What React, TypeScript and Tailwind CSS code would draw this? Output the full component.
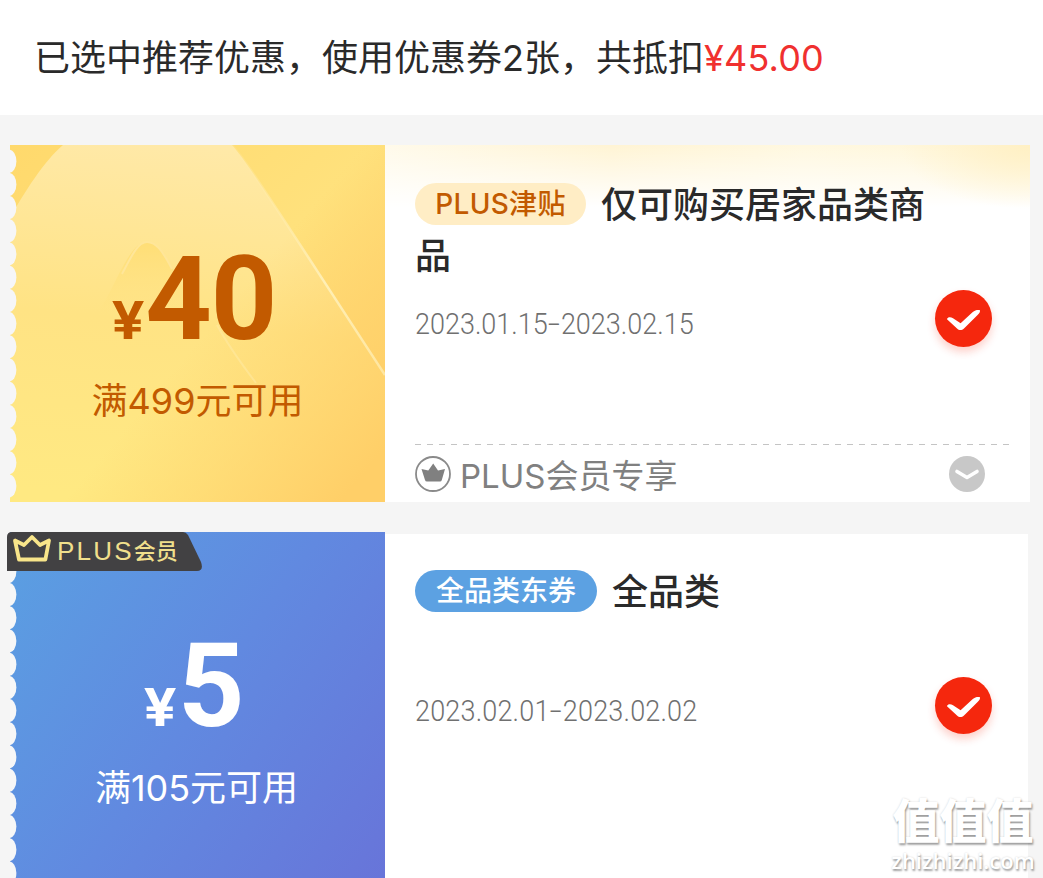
const Scallops = ({ fill }: { fill: string }) => (
    <svg className="absolute left-0 top-0 h-[357px] w-2" viewBox="0 0 8 357">
        {Array.from({ length: 15 }, (_, i) => (
            <ellipse key={i} cx="-1" cy={16.2 + i * 23.2} rx="7.4" ry="11.6" fill={fill} />
        ))}
    </svg>
)

const Checked = () => (
    <div className="flex size-[57px] items-center justify-center rounded-full bg-[#f5270d] shadow-[0_5px_8px_rgba(245,39,13,0.22)]">
        <svg className="size-[57px]" viewBox="0 0 57 57" fill="none">
            <path
                d="M12 29.2C12.500 27 15.500 26.600 18 28.200L25.600 33.200L37.500 22.200C40.300 19.800 43 19.800 45 20.200C45.200 22 44.400 23.300 42.600 25L29 38.400C26.600 40.600 24.200 40.600 22 38.400Z"
                fill="#fff"
            />
        </svg>
    </div>
)

const Price = ({ value }: { value: string }) => (
    <div className="flex h-[84px] items-baseline pr-[4px] font-bold leading-[84px]">
        <span className="mr-[1px] inline-block origin-right scale-x-[1.12] text-[52px]">¥</span>
        <span className="font-[Roboto] text-[116px] tracking-[-1px]">{value}</span>
    </div>
)

const Dates = ({ from, to }: { from: string; to: string }) => (
    <p className="h-[30px] w-[330px] origin-left scale-x-[0.9] font-[Roboto] text-[30px] font-light leading-[30px] text-[#707070]">
        {from}
        <span className="mx-[3px] inline-block scale-x-[1.6]">-</span>
        {to}
    </p>
)

const PlusTag = () => (
    <div className="absolute -left-[3px] top-0 h-[39px] w-[196px]">
        <svg className="absolute inset-0" width="196" height="39" viewBox="0 0 196 39" fill="none">
            <path d="M0 39V5Q0 0 5 0H176Q179 0 181 3L194 30Q197 39 190 39Z" fill="#424143" />
            <path
                d="M8 8.500L17 13L25 5L33 13L42 8.500L38.400 27.500H12Z"
                stroke="#f8e58a"
                strokeWidth="3.8"
                strokeLinejoin="round"
            />
        </svg>
        <p className="relative flex h-[38px] items-center pl-[50px] text-[#f0df8c]">
            <span className="font-['Liberation_Sans'] text-[26px] tracking-[2.2px]">PLUS</span>
            <span className="text-[22px] font-medium">会员</span>
        </p>
    </div>
)

const App = () => {
    return (
        <div className="relative h-[878px] w-[1043px] overflow-hidden bg-[#f5f5f5] font-[Inter,'Noto_Sans_CJK_SC',sans-serif] text-[#2a2a2a]">
            <header className="flex h-[115px] items-center bg-white pl-[34px] text-[36px] leading-[50px]">
                <p className="whitespace-nowrap">
                    已选中推荐优惠，使用优惠券2张，共抵扣
                    <span className="tracking-[0.2px] text-[#f0302f]">¥45.00</span>
                </p>
            </header>

            <main className="flex flex-col gap-[30px] pl-[10px] pt-[30px]">
                <section className="flex h-[357px] w-[1020px]">
                    <div className="relative w-[375px] bg-linear-[135deg,#ffd96c_0%,#ffe17c_50%,#ffcf68_100%]">
                        <svg className="absolute inset-0" width="375" height="357" viewBox="0 0 375 357" fill="none">
                            <defs>
                                <linearGradient id="hill" x1="0.5" y1="0" x2="0.4" y2="1">
                                    <stop offset="0" stopColor="#ffe9a8" />
                                    <stop offset="0.5" stopColor="#ffe384" />
                                    <stop offset="1" stopColor="#ffe982" />
                                </linearGradient>
                                <linearGradient id="shade" x1="0.25" y1="0.25" x2="1" y2="0.85">
                                    <stop offset="0.4" stopColor="#ffcf68" stopOpacity="0" />
                                    <stop offset="1" stopColor="#ffcf68" />
                                </linearGradient>
                                <linearGradient id="ridge" x1="0" y1="0" x2="1" y2="1">
                                    <stop offset="0" stopColor="#ffeaa6" stopOpacity="0.2" />
                                    <stop offset="0.6" stopColor="#ffefb5" />
                                    <stop offset="1" stopColor="#ffe6a0" />
                                </linearGradient>
                                <linearGradient id="inner" x1="0" y1="0" x2="0" y2="1">
                                    <stop offset="0" stopColor="#ffde76" />
                                    <stop offset="0.5" stopColor="#ffe17b" stopOpacity="0" />
                                </linearGradient>
                            </defs>
                            <path d="M0 73C14 48 34 16 53 0H222C238 18 262 57 375 230V357H0Z" fill="url(#hill)" />
                            <path d="M0 0H375V357H0Z" fill="url(#shade)" />
                            <path d="M222 0C238 18 262 57 375 230" stroke="url(#ridge)" strokeWidth="2.5" />
                            <path d="M90 165C108 135 120 97 137 97S163 130 180 153L245 240Z" fill="url(#inner)" />
                            <path d="M112 129C122 110 128 97 137 97S152 105 162 124" stroke="#ffe699" strokeWidth="2" />
                            <path d="M207 180C220 204 234 222 246 238" stroke="#ffeaa0" strokeOpacity="0.6" strokeWidth="2" />
                        </svg>
                        <Scallops fill="#f6f6f8" />
                        <div className="relative flex flex-col items-center pt-[112px] text-[#c25a00]">
                            <Price value="40" />
                            <p className="mt-[35px] text-[36px] leading-[50px]">满499元可用</p>
                        </div>
                    </div>

                    <div className="flex w-[645px] flex-col bg-white bg-[radial-gradient(ellipse_130px_64px_at_100%_0,#fff0c4,transparent),linear-gradient(to_bottom,transparent,#fff_62px),linear-gradient(to_right,#fffaea,#fff4d4_35%,#fff8e0_65%,#fff6d8)] pl-[30px]">
                        <div className="mt-[35px] h-[100px] w-[530px] text-[36px] font-medium leading-[51px]">
                            <span className="mr-[15px] inline-flex h-[42px] w-[171px] items-center justify-center rounded-full bg-[#ffedc5] align-[4px] text-[28px] leading-[36px] tracking-[0.3px] text-[#c25a00]">
                                PLUS津贴
                            </span>
                            仅可购买居家品类商品
                        </div>
                        <div className="flex h-[78px] items-start justify-between pr-[38px]">
                            <div className="pt-[29px]">
                                <Dates from="2023.01.15" to="2023.02.15" />
                            </div>
                            <div className="pt-[10px]">
                                <Checked />
                            </div>
                        </div>
                        <svg className="mt-[85px]" width="595" height="2" viewBox="0 0 595 2">
                            <path d="M0 1.500H595" stroke="#c4c4c4" strokeDasharray="6 6" />
                        </svg>
                        <div className="mt-[11px] flex items-center pr-[45px] text-[33px] leading-[36px] text-[#808080]">
                            <svg className="mr-[9px]" width="36" height="36" viewBox="0 0 36 36">
                                <circle cx="18" cy="18" r="17" fill="none" stroke="#8a8a8a" strokeWidth="1.800" />
                                <path
                                    d="M6.500 13L13.300 14.500L18.200 7.500L23 14.500L30 13L26.800 24Q26.400 25.500 25 25.500H12Q10.400 25.500 10 24Z"
                                    fill="#808080"
                                />
                            </svg>
                            <span className="mt-[2px] -mb-[2px]">PLUS会员专享</span>
                            <svg className="ml-auto" width="36" height="36" viewBox="0 0 36 36" fill="none">
                                <circle cx="18" cy="18" r="18" fill="#c8c8c8" />
                                <path
                                    d="M8 15.500L18 21.500L28 15.500"
                                    stroke="#fff"
                                    strokeWidth="3.600"
                                    strokeLinecap="round"
                                    strokeLinejoin="round"
                                />
                            </svg>
                        </div>
                    </div>
                </section>

                <section className="flex h-[357px] w-[1018px]">
                    <div className="relative w-[375px] bg-linear-[125deg,#5aa0e2_0%,#6189e0_50%,#6874d9_100%] text-white">
                        <Scallops fill="#f7f7f7" />
                        <PlusTag />
                        <div className="flex flex-col items-center pt-[112px]">
                            <Price value="5" />
                            <p className="mt-[35px] pr-[2px] text-[36px] leading-[50px]">满105元可用</p>
                        </div>
                    </div>

                    <div className="mt-[2px] flex w-[643px] flex-col bg-white pl-[30px]">
                        <div className="mt-[33px] h-[100px] text-[36px] font-medium leading-[51px]">
                            <span className="mr-[15px] inline-flex h-[42px] w-[182px] items-center justify-center rounded-full bg-[#5ca1e2] align-[4px] text-[28px] leading-[36px] text-white">
                                全品类东券
                            </span>
                            全品类
                        </div>
                        <div className="flex items-start justify-between pr-[36px]">
                            <div className="pt-[29px] tracking-[0.2px]">
                                <Dates from="2023.02.01" to="2023.02.02" />
                            </div>
                            <div className="pt-[10px]">
                                <Checked />
                            </div>
                        </div>
                    </div>
                </section>
            </main>

            <div className="absolute bottom-[6px] right-[9px] flex w-[142px] flex-col items-center text-white [text-shadow:1px_2px_2px_rgba(0,0,0,0.36),0_0_2px_rgba(0,0,0,0.16)]">
                <span className="mb-[2px] text-[47px] font-black leading-[51px]">值值值</span>
                <span className="font-['Open_Sans'] text-[22px] font-semibold leading-[24px]">zhizhizhi.com</span>
            </div>
        </div>
    )
}

export default App
